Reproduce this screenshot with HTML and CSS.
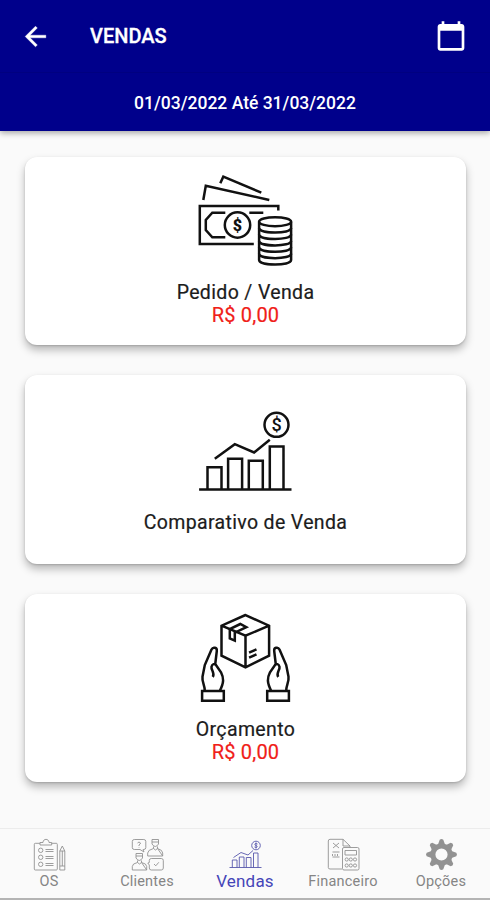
FILE: index.html
```html
<!DOCTYPE html>
<html lang="pt-BR">
<head>
    <meta charset="UTF-8">
    <meta name="viewport" content="width=device-width, initial-scale=1.0">
    <title>Vendas</title>
    <link rel="stylesheet" href="styles.css">
</head>
<body>
    <header class="header">
        <div class="toolbar">
            <svg class="back-icon" viewBox="0 0 24 24"><path d="M20 11H7.830l5.590-5.590L12 4l-8 8 8 8 1.410-1.410L7.830 13H20z"/></svg>
            <h1>VENDAS</h1>
            <svg class="calendar-icon" viewBox="0 0 24 24"><path d="M20 3h-1V1h-2v2H7V1H5v2H4c-1.100 0-2 .9-2 2v16c0 1.100.9 2 2 2h16c1.100 0 2-.9 2-2V5c0-1.100-.9-2-2-2zm0 18H4V8h16z"/></svg>
        </div>
        <div class="period">01/03/2022 Até 31/03/2022</div>
    </header>

    <main class="cards">
        <div class="card">
            <svg class="card-icon" viewBox="0.7 0 100 96">
                <path d="M25 8.300 28 1.700 66 17.700M8 25l2.500-14.300L74 25"/>
                <path d="M83 35.500V31H4.500v38h54M30 62.300H17L10.500 55V45l6.500-7.300h13M54 37.700h14"/>
                <circle cx="42.200" cy="50" r="12.700"/>
                <text class="coin-sign heavy" x="42.200" y="55.700">$</text>
                <ellipse cx="79.800" cy="46.700" rx="16" ry="4.500"/>
                <path d="M63.800 46.700v38.400M95.800 46.700v38.400"/>
                <path d="M63.800 53.100c0 6 32 6 32 0M63.800 59.500c0 6 32 6 32 0M63.800 65.900c0 6 32 6 32 0M63.800 72.300c0 6 32 6 32 0M63.800 78.700c0 6 32 6 32 0M63.800 85.100c0 6 32 6 32 0"/>
            </svg>
            <span class="card-title">Pedido / Venda</span>
            <span class="card-value">R$ 0,00</span>
        </div>

        <div class="card">
            <svg class="card-icon" viewBox="0.7 0 100 96">
                <path d="M3.800 84.500h92.400M12.200 84.500V62.200h14v22.300M32.800 84.500V53.800h14v30.700M53.500 84.500V55.800h14v28.700M74.500 84.500v-43h13.700v43M19.500 53.800l20-14.600 19.300 8.300 15.700-12.700"/>
                <circle cx="81.200" cy="19.800" r="12"/>
                <text class="coin-sign" x="81.200" y="26">$</text>
            </svg>
            <span class="card-title">Comparativo de Venda</span>
        </div>

        <div class="card">
            <svg class="card-icon" viewBox="0.7 0 100 96">
                <path d="M50.200 3 26.200 13.700v30l24 11.600 23.600-11.600v-30zM26.200 13.700l24 10 23.600-10M50.200 23.700v31.600"/>
                <path d="M45 12 34.500 17v9.500l5 2.200v-8L51 15.200zM53.800 40.700l7.400-3.400M53.800 45.700l7.400-3.400"/>
                <g id="hand">
                    <path d="M6.800 79h21.700v9.700H6.800z"/>
                    <path d="M9.500 79c0-6-3-9-2.300-14.300L9.500 53l6.700-15.500c1.500-3 5.800-2 5.300 1.500L20 51.500M17.500 65c2.500-4-2-7-1.300-10.300.8-3 3-3.200 4.500-1.700l5 7.300c3 6 3 10-1.200 18.700"/>
                </g>
                <use href="#hand" transform="translate(100.400 0) scale(-1 1)"/>
            </svg>
            <span class="card-title">Orçamento</span>
            <span class="card-value">R$ 0,00</span>
        </div>
    </main>

    <nav class="bottom-nav">
        <a class="nav-item">
            <svg class="nav-icon" viewBox="0 0 34 34">
                <path d="M8 5.300H3.300q-1 0-1 1V31q0 1 1 1h21q1 0 1-1V6.300q0-1-1-1h-4.600M8 7V4.500h3C11 .3 17 .3 17 4.500h2.700V7z"/>
                <circle cx="8.700" cy="12.300" r="2.200"/>
                <circle cx="8.700" cy="19.300" r="2.200"/>
                <circle cx="8.700" cy="26.300" r="2.200"/>
                <path d="M13.500 11.500h8M13.500 13.500h8M13.500 18.500h8M13.500 20.500h8M13.500 25.500h8M13.500 27.500h8"/>
                <path d="M27.800 32V13l2.500-5 2.500 5v19zM27.800 13h5M27.800 28h5M30.300 13v15"/>
            </svg>
            <span>OS</span>
        </a>
        <a class="nav-item">
            <svg class="nav-icon" viewBox="0 0 34 34">
                <path d="M4.300 1.500h9.500q2 0 2 2v6q0 2-2 2H13l1 2.500-4-2.500H4.300q-2 0-2-2v-6q0-2 2-2zM7.500 5q1.500-2 3 0 0 1-1.500 2v1M9 9.500v.5"/>
                <path d="M22 1.500h6.500V6q-3.200 5-6.500 0zM22 4h6.500M23.500 8.500v2l2 1.500 2-1.500v-2M17.700 18v-3q0-3 5.800-4.500M27.500 10.500q5.200 1.500 5.200 4.500v3z M17.700 18h15"/>
                <path d="M6 15.500h6.500V20q-3.200 5-6.500 0zM6 18h6.500M7.500 22.500v2l2 1.500 2-1.500v-2M2.300 32v-3.500q0-3 5.200-4M11.500 24.500q5.200 1 5.200 4V32zM2.300 32h14.400"/>
                <path d="M21.300 20.500h10q2 0 2 2V30q0 2-2 2h-10q-2 0-2-2v-3l-1.500-2 1.500-.5v-2q0-2 2-2zM24 26l1.800 1.800 3-3.500"/>
            </svg>
            <span>Clientes</span>
        </a>
        <a class="nav-item active">
            <svg class="nav-icon" viewBox="0 0 34 34">
                <path d="M1.500 29.500h32M4.300 29.500V22H9v7.500M11.300 29.500V19H16v10.500M18.300 29.500v-10H23v10M25.500 29.500V15H30v14.500M5.500 19.500l7.500-5 7 2.500 5-4.500"/>
                <circle cx="28" cy="7.500" r="4.300"/>
                <path d="M29.500 6c-3-1.500-3.500 1-1.500 1.500s1.500 3-1.500 1.500M28 4.500v6"/>
            </svg>
            <span>Vendas</span>
        </a>
        <a class="nav-item">
            <svg class="nav-icon" viewBox="0 0 34 34">
                <path d="M16 31H4q-1.700 0-1.700-1.500V3Q2.300 1.300 4 1.300h13L24 8v1.500M17 1.300V8h7M7 5l6 5M13 5l-6 5M6.500 14h7M6.500 18v-2M9 18v-2M11.500 18v-2M6.500 19h7"/>
                <path d="M18 9.500h13.500q1.500 0 1.500 1.500v19.500q0 1.500-1.500 1.500H18q-1.500 0-1.500-1.500V11q0-1.500 1.500-1.500zM19 12.500h11.500V17H19z"/>
                <circle cx="20.700" cy="21.500" r="1.600"/><circle cx="24.800" cy="21.500" r="1.600"/><circle cx="29" cy="21.500" r="1.600"/>
                <circle cx="20.700" cy="27.500" r="1.600"/><circle cx="24.800" cy="27.500" r="1.600"/><circle cx="29" cy="27.500" r="1.600"/>
            </svg>
            <span>Financeiro</span>
        </a>
        <a class="nav-item">
            <svg class="nav-icon gear" viewBox="0 0 34 34">
                <circle cx="17.500" cy="16.500" r="8.600"/>
                <g id="teeth">
                    <path id="tooth" d="M14 6.500 15.700 1.700q1.800-1.400 3.600 0L21 6.500zM14 26.500l1.700 4.800q1.800 1.400 3.600 0l1.700-4.800z"/>
                    <use href="#tooth" transform="rotate(90 17.500 16.500)"/>
                </g>
                <use href="#teeth" transform="rotate(45 17.500 16.500)"/>
            </svg>
            <span>Opções</span>
        </a>
    </nav>
</body>
</html>
```

FILE: styles.css
```css
* {
    box-sizing: border-box;
}
body {
    font-family: Roboto, 'Liberation Sans', sans-serif;
    background-color: #fafafa;
    margin: 0;
    height: 900px;
    display: flex;
    flex-direction: column;
}
.header {
    height: 130.500px;
    background: #00008b;
    color: #fff;
    box-shadow: 0 2px 6px rgba(0, 0, 0, 0.35);
}
.toolbar {
    height: 73px;
    display: flex;
    align-items: center;
    padding: 0 23px 0 20px;
    border-bottom: 1px solid #000080;
}
.toolbar svg {
    fill: #fff;
}
.back-icon {
    width: 31px;
    height: 31px;
    stroke: #fff;
    stroke-width: 0.3;
}
.toolbar h1 {
    flex: 1;
    margin: 0 0 0 39px;
    font-size: 20px;
    font-weight: 500;
    -webkit-text-stroke: 0.3px #fff;
}
.calendar-icon {
    width: 32px;
    height: 32px;
}
.period {
    height: 57px;
    line-height: 60px;
    text-align: center;
    font-size: 17.5px;
    font-weight: 500;
}
.cards {
    flex: 1;
    display: flex;
    flex-direction: column;
    gap: 30px;
    padding: 26px 24px 0 25px;
}
.card {
    height: 188.500px;
    display: flex;
    flex-direction: column;
    align-items: center;
    justify-content: center;
    background: #fff;
    border-radius: 12px;
    box-shadow: 0 5px 8px rgba(0, 0, 0, 0.27), 0 1px 2px rgba(0, 0, 0, 0.15);
}
.card-icon {
    width: 100px;
    height: 96px;
    margin-bottom: 10px;
    fill: none;
    stroke: #111;
    stroke-width: 2.5;
}
.coin-sign {
    font-size: 18px;
    font-weight: 500;
    text-anchor: middle;
    fill: #111;
    stroke: none;
}
.coin-sign.heavy {
    font-size: 16px;
    font-weight: 900;
}
.card-title,
.card-value {
    font-size: 20px;
    line-height: 23px;
}
.card-title {
    color: #1c1c1c;
    font-size: 19.5px;
    letter-spacing: 0.35px;
    -webkit-text-stroke: 0.2px #1c1c1c;
}
.card-value {
    color: #f02018;
    letter-spacing: 0.2px;
    -webkit-text-stroke: 0.2px #f02018;
}
.bottom-nav {
    height: 72px;
    display: flex;
    border-top: 1px solid #ececec;
    border-bottom: 2px solid #b4b4b4;
}
.nav-item {
    flex: 1;
    display: flex;
    flex-direction: column;
    align-items: center;
    padding-top: 9px;
    color: #858585;
    font-size: 14.5px;
    letter-spacing: 0.2px;
    line-height: 19px;
}
.nav-item.active {
    color: #4545b8;
    font-size: 17px;
}
.nav-icon {
    width: 34px;
    height: 34px;
    fill: none;
    stroke: #929292;
    stroke-width: 0.9;
}
.active .nav-icon {
    stroke: #5858ad;
}
.gear circle {
    stroke-width: 5;
}
.gear path {
    fill: #929292;
    stroke: none;
}
```
